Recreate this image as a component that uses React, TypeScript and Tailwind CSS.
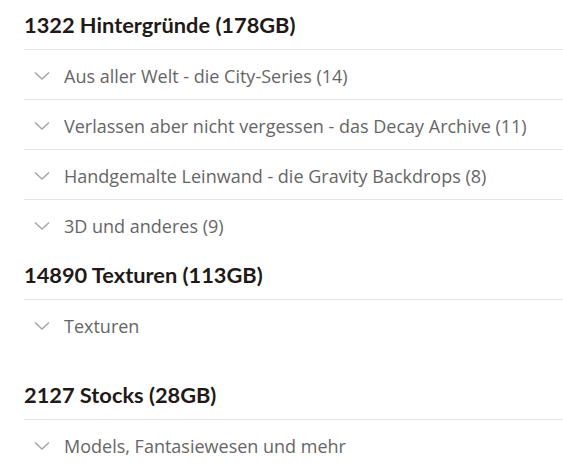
import React from "react";

const Chevron = () => (
  <svg width="16" height="10" viewBox="0 0 16 10" className="shrink-0">
    <polyline points="1,1.5 8,8 15,1.5" fill="none" stroke="#a6a6a6" strokeWidth="1.5" />
  </svg>
);

const Item = ({ label, last }: { label: string; last?: boolean }) => (
  <div className={`flex h-[50px] items-center gap-[14px] pl-[10px] pt-[2px] ${last ? "" : "border-b border-[#e6e6e6]"}`}>
    <Chevron />
    <span className="text-[18px] leading-[24px] text-[#666666]" style={{ fontFamily: '"Open Sans", sans-serif' }}>
      {label}
    </span>
  </div>
);

const Heading = ({ children }: { children: React.ReactNode }) => (
  <div
    className="flex h-[50px] items-center border-b border-[#e6e6e6] pt-[1px] text-[21.8px] leading-[26px] font-bold text-[#1f1a17]"
    style={{ fontFamily: "Lato, sans-serif" }}
  >
    {children}
  </div>
);

export default function App() {
  return (
    <div className="min-h-[466px] w-[563px] overflow-hidden bg-white pl-6">
      <Heading>1322 Hintergründe (178GB)</Heading>
      <Item label="Aus aller Welt - die City-Series (14)" />
      <Item label="Verlassen aber nicht vergessen - das Decay Archive (11)" />
      <Item label="Handgemalte Leinwand - die Gravity Backdrops (8)" />
      <Item label="3D und anderes (9)" last />
      <Heading>14890 Texturen (113GB)</Heading>
      <Item label="Texturen" last />
      <div className="h-[20px]" />
      <Heading>2127 Stocks (28GB)</Heading>
      <Item label="Models, Fantasiewesen und mehr" last />
    </div>
  );
}
